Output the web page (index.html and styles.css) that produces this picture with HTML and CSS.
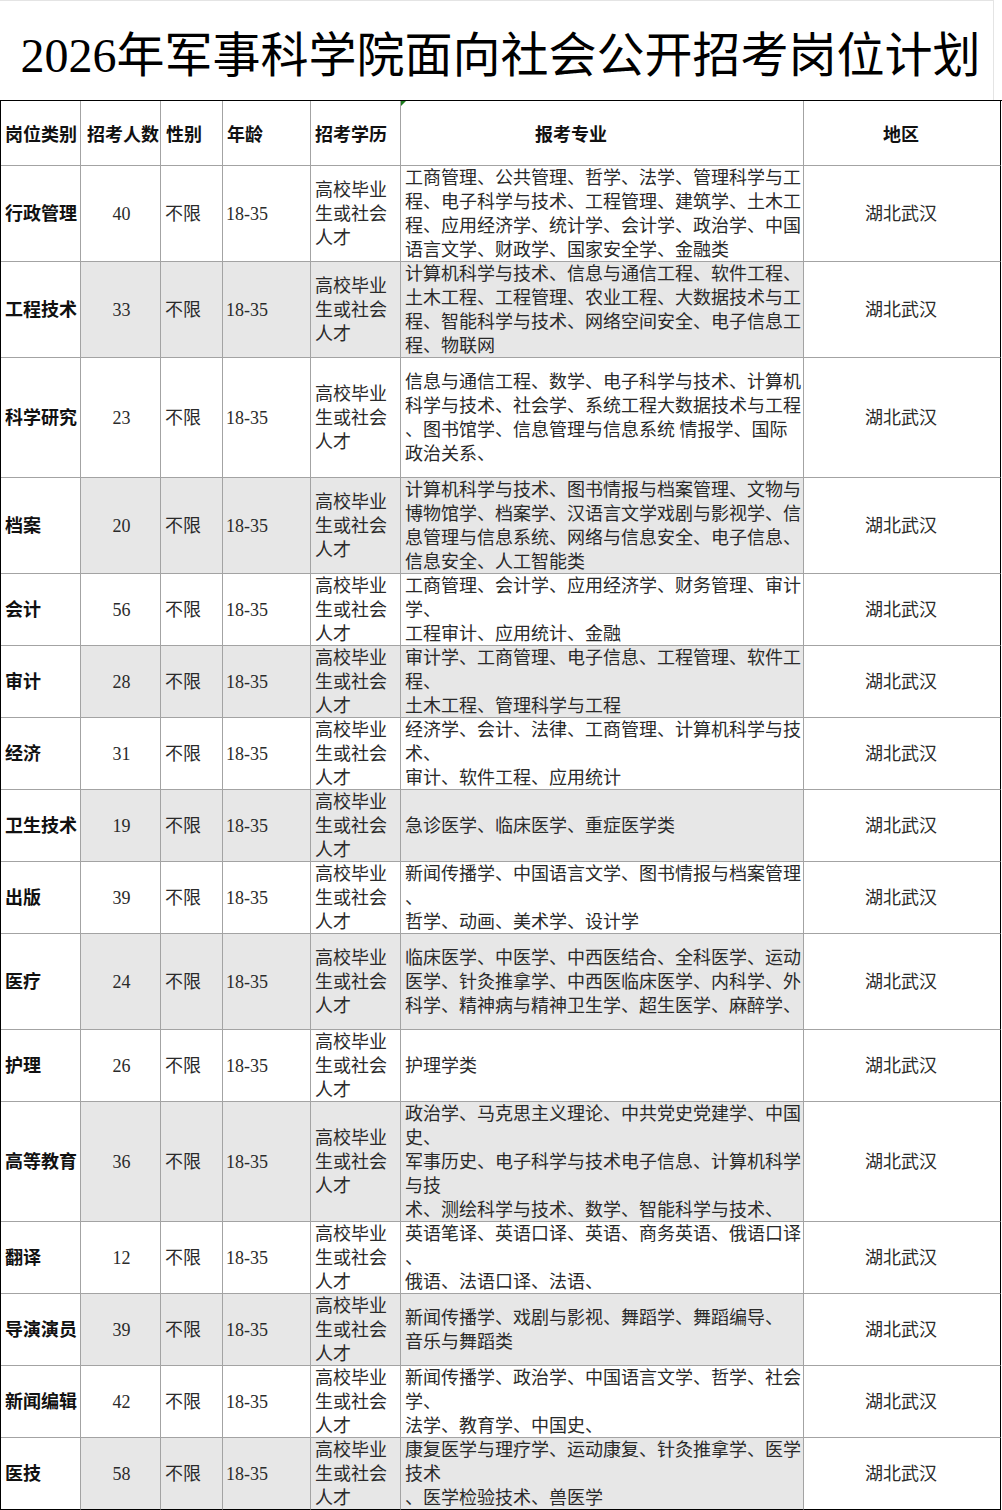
FILE: index.html
```html
<!DOCTYPE html>
<html lang="zh-CN">
<head>
<meta charset="utf-8">
<title>2026年军事科学院面向社会公开招考岗位计划</title>
<link rel="stylesheet" href="styles.css">
</head>
<body>
<div class="page">
  <div class="title">2026年军事科学院面向社会公开招考岗位计划</div>
  <div class="table">
    <div class="row head">
      <div class="c c1">岗位类别</div>
      <div class="c c2">招考人数</div>
      <div class="c c3">性别</div>
      <div class="c c4">年龄</div>
      <div class="c c5">招考学历</div>
      <div class="c c6"><span class="note"></span>报考专业</div>
      <div class="c c7">地区</div>
    </div>

    <div class="row h96">
      <div class="c c1">行政管理</div><div class="c c2">40</div><div class="c c3">不限</div><div class="c c4">18-35</div>
      <div class="c c5">高校毕业<br>生或社会<br>人才</div>
      <div class="c c6">工商管理、公共管理、哲学、法学、管理科学与工<br>程、电子科学与技术、工程管理、建筑学、土木工<br>程、应用经济学、统计学、会计学、政治学、中国<br>语言文学、财政学、国家安全学、金融类</div>
      <div class="c c7">湖北武汉</div>
    </div>

    <div class="row h96 alt">
      <div class="c c1">工程技术</div><div class="c c2">33</div><div class="c c3">不限</div><div class="c c4">18-35</div>
      <div class="c c5">高校毕业<br>生或社会<br>人才</div>
      <div class="c c6">计算机科学与技术、信息与通信工程、软件工程、<br>土木工程、工程管理、农业工程、大数据技术与工<br>程、智能科学与技术、网络空间安全、电子信息工<br>程、物联网</div>
      <div class="c c7">湖北武汉</div>
    </div>

    <div class="row h120">
      <div class="c c1">科学研究</div><div class="c c2">23</div><div class="c c3">不限</div><div class="c c4">18-35</div>
      <div class="c c5">高校毕业<br>生或社会<br>人才</div>
      <div class="c c6">信息与通信工程、数学、电子科学与技术、计算机<br>科学与技术、社会学、系统工程大数据技术与工程<br>、图书馆学、信息管理与信息系统 情报学、国际<br>政治关系、</div>
      <div class="c c7">湖北武汉</div>
    </div>

    <div class="row h96 alt">
      <div class="c c1">档案</div><div class="c c2">20</div><div class="c c3">不限</div><div class="c c4">18-35</div>
      <div class="c c5">高校毕业<br>生或社会<br>人才</div>
      <div class="c c6">计算机科学与技术、图书情报与档案管理、文物与<br>博物馆学、档案学、汉语言文学戏剧与影视学、信<br>息管理与信息系统、网络与信息安全、电子信息、<br>信息安全、人工智能类</div>
      <div class="c c7">湖北武汉</div>
    </div>

    <div class="row h72">
      <div class="c c1">会计</div><div class="c c2">56</div><div class="c c3">不限</div><div class="c c4">18-35</div>
      <div class="c c5">高校毕业<br>生或社会<br>人才</div>
      <div class="c c6">工商管理、会计学、应用经济学、财务管理、审计<br>学、<br>工程审计、应用统计、金融</div>
      <div class="c c7">湖北武汉</div>
    </div>

    <div class="row h72 alt">
      <div class="c c1">审计</div><div class="c c2">28</div><div class="c c3">不限</div><div class="c c4">18-35</div>
      <div class="c c5">高校毕业<br>生或社会<br>人才</div>
      <div class="c c6">审计学、工商管理、电子信息、工程管理、软件工<br>程、<br>土木工程、管理科学与工程</div>
      <div class="c c7">湖北武汉</div>
    </div>

    <div class="row h72">
      <div class="c c1">经济</div><div class="c c2">31</div><div class="c c3">不限</div><div class="c c4">18-35</div>
      <div class="c c5">高校毕业<br>生或社会<br>人才</div>
      <div class="c c6">经济学、会计、法律、工商管理、计算机科学与技<br>术、<br>审计、软件工程、应用统计</div>
      <div class="c c7">湖北武汉</div>
    </div>

    <div class="row h72 alt">
      <div class="c c1">卫生技术</div><div class="c c2">19</div><div class="c c3">不限</div><div class="c c4">18-35</div>
      <div class="c c5">高校毕业<br>生或社会<br>人才</div>
      <div class="c c6">急诊医学、临床医学、重症医学类</div>
      <div class="c c7">湖北武汉</div>
    </div>

    <div class="row h72">
      <div class="c c1">出版</div><div class="c c2">39</div><div class="c c3">不限</div><div class="c c4">18-35</div>
      <div class="c c5">高校毕业<br>生或社会<br>人才</div>
      <div class="c c6">新闻传播学、中国语言文学、图书情报与档案管理<br>、<br>哲学、动画、美术学、设计学</div>
      <div class="c c7">湖北武汉</div>
    </div>

    <div class="row h96 alt">
      <div class="c c1">医疗</div><div class="c c2">24</div><div class="c c3">不限</div><div class="c c4">18-35</div>
      <div class="c c5">高校毕业<br>生或社会<br>人才</div>
      <div class="c c6">临床医学、中医学、中西医结合、全科医学、运动<br>医学、针灸推拿学、中西医临床医学、内科学、外<br>科学、精神病与精神卫生学、超生医学、麻醉学、</div>
      <div class="c c7">湖北武汉</div>
    </div>

    <div class="row h72">
      <div class="c c1">护理</div><div class="c c2">26</div><div class="c c3">不限</div><div class="c c4">18-35</div>
      <div class="c c5">高校毕业<br>生或社会<br>人才</div>
      <div class="c c6">护理学类</div>
      <div class="c c7">湖北武汉</div>
    </div>

    <div class="row h120 alt">
      <div class="c c1">高等教育</div><div class="c c2">36</div><div class="c c3">不限</div><div class="c c4">18-35</div>
      <div class="c c5">高校毕业<br>生或社会<br>人才</div>
      <div class="c c6">政治学、马克思主义理论、中共党史党建学、中国<br>史、<br>军事历史、电子科学与技术电子信息、计算机科学<br>与技<br>术、测绘科学与技术、数学、智能科学与技术、</div>
      <div class="c c7">湖北武汉</div>
    </div>

    <div class="row h72">
      <div class="c c1">翻译</div><div class="c c2">12</div><div class="c c3">不限</div><div class="c c4">18-35</div>
      <div class="c c5">高校毕业<br>生或社会<br>人才</div>
      <div class="c c6">英语笔译、英语口译、英语、商务英语、俄语口译<br>、<br>俄语、法语口译、法语、</div>
      <div class="c c7">湖北武汉</div>
    </div>

    <div class="row h72 alt">
      <div class="c c1">导演演员</div><div class="c c2">39</div><div class="c c3">不限</div><div class="c c4">18-35</div>
      <div class="c c5">高校毕业<br>生或社会<br>人才</div>
      <div class="c c6">新闻传播学、戏剧与影视、舞蹈学、舞蹈编导、<br>音乐与舞蹈类</div>
      <div class="c c7">湖北武汉</div>
    </div>

    <div class="row h72">
      <div class="c c1">新闻编辑</div><div class="c c2">42</div><div class="c c3">不限</div><div class="c c4">18-35</div>
      <div class="c c5">高校毕业<br>生或社会<br>人才</div>
      <div class="c c6">新闻传播学、政治学、中国语言文学、哲学、社会<br>学、<br>法学、教育学、中国史、</div>
      <div class="c c7">湖北武汉</div>
    </div>

    <div class="row h72 alt last">
      <div class="c c1">医技</div><div class="c c2">58</div><div class="c c3">不限</div><div class="c c4">18-35</div>
      <div class="c c5">高校毕业<br>生或社会<br>人才</div>
      <div class="c c6">康复医学与理疗学、运动康复、针灸推拿学、医学<br>技术<br>、医学检验技术、兽医学</div>
      <div class="c c7">湖北武汉</div>
    </div>
  </div>
</div>
</body>
</html>
```

FILE: styles.css
```css
* { box-sizing: border-box; }

html, body {
  margin: 0;
  padding: 0;
  background: #ffffff;
}

body {
  font-family: "Liberation Serif", "Noto Sans CJK SC", serif;
  color: #2a2a2a;
}

.page {
  width: 1002px;
}

.title {
  height: 100px;
  width: 994px;
  border-top: 1px solid #e4e4e4;
  border-right: 1px solid #e4e4e4;
  display: flex;
  align-items: center;
  justify-content: center;
  padding: 10px 0 0 8px;
  font-size: 48px;
  line-height: 1;
  color: #000;
  white-space: nowrap;
}

.table {
  border-top: 1px solid #000;
  border-left: 1px solid #000;
}

.row {
  display: grid;
  grid-template-columns: 80px 80px 62px 88px 90px 403px 197px;
}

.head { height: 65px; }
.h72 { height: 72px; }
.h96 { height: 96px; }
.h120 { height: 120px; }

.c {
  border-right: 1px solid #a3a3a3;
  border-bottom: 1px solid #a3a3a3;
  display: flex;
  align-items: center;
  font-size: 18px;
  line-height: 24px;
  white-space: nowrap;
  overflow: hidden;
  position: relative;
  padding-top: 1px;
}

.c7 { border-right-color: #000; }
.last .c { border-bottom-color: #000; }

.c1 { padding-left: 4px; font-weight: bold; color: #111; }
.c2 { justify-content: center; padding-left: 2px; }
.c3 { padding-left: 4px; }
.c4 { padding-left: 3px; }
.c5 { padding-left: 4px; }
.c6 { padding-left: 4px; }
.c7 { justify-content: center; padding-right: 2px; }

.alt .c2,
.alt .c3,
.alt .c4,
.alt .c5,
.alt .c6 { background: #e7e7e7; }

.head .c { font-weight: bold; color: #111; padding-top: 3px; }
.head .c2 { justify-content: flex-start; padding-left: 6px; }
.head .c3 { padding-left: 5px; }
.head .c4 { padding-left: 4px; }
.head .c6 { padding-left: 134px; }

.note {
  position: absolute;
  left: 0;
  top: 0;
  width: 0;
  height: 0;
  border-top: 5px solid #1e7b1e;
  border-right: 5px solid transparent;
}
```
